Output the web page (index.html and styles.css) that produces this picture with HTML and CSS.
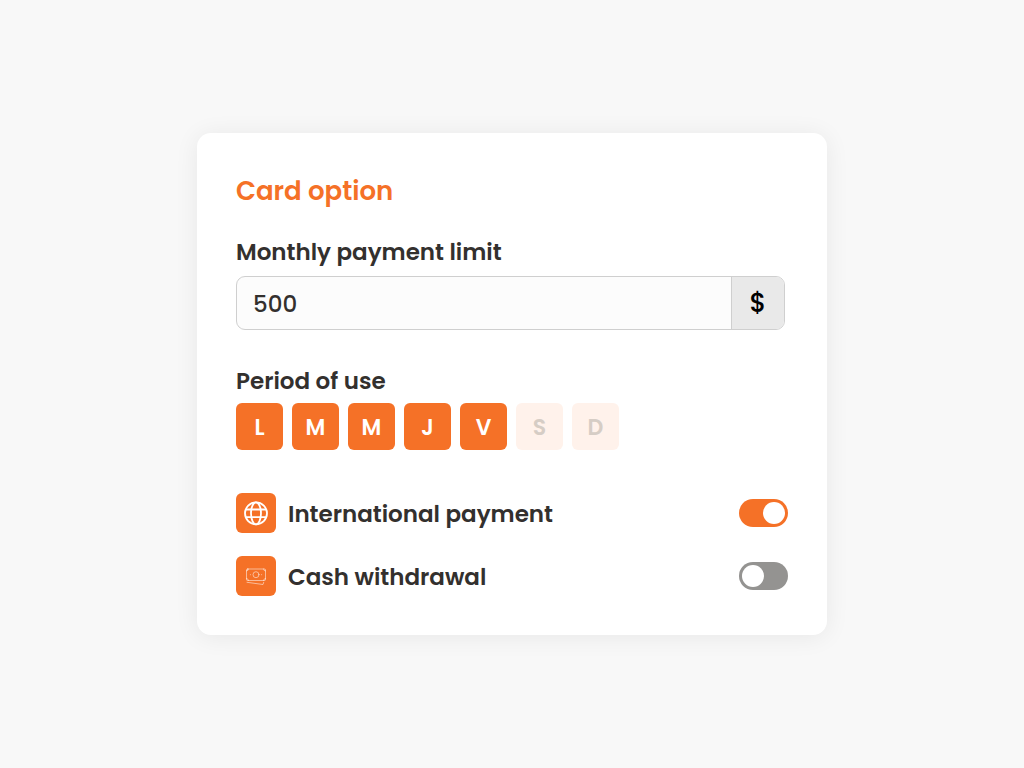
FILE: index.html
```html
<!DOCTYPE html>
<html lang="en">
<head>
<meta charset="utf-8">
<meta name="viewport" content="width=device-width, initial-scale=1">
<title>Card option</title>
<link rel="stylesheet" href="styles.css">
</head>
<body>
<main class="page">
  <form class="card">
    <h1 class="card-title">Card option</h1>

    <div class="limit">
      <label class="label" for="limit">Monthly payment limit</label>
      <div class="field">
        <input class="field-input" id="limit" type="text" inputmode="numeric" value="500">
        <span class="field-unit">$</span>
      </div>
    </div>

    <fieldset class="period">
      <legend class="label">Period of use</legend>
      <div class="days">
        <button class="day day-on" type="button" aria-pressed="true">L</button>
        <button class="day day-on" type="button" aria-pressed="true">M</button>
        <button class="day day-on" type="button" aria-pressed="true">M</button>
        <button class="day day-on" type="button" aria-pressed="true">J</button>
        <button class="day day-on" type="button" aria-pressed="true">V</button>
        <button class="day" type="button" aria-pressed="false">S</button>
        <button class="day" type="button" aria-pressed="false">D</button>
      </div>
    </fieldset>

    <div class="options">
      <div class="option">
        <svg class="icon" viewBox="0 0 40 40" fill="none" stroke="#fff" stroke-width="1.8" aria-hidden="true">
          <circle cx="20" cy="20.3" r="11"/>
          <ellipse cx="20" cy="20.3" rx="5" ry="11"/>
          <path d="M9.700 16.500h20.600M9.700 24.200h20.600"/>
        </svg>
        <label class="option-label" for="international">International payment</label>
        <input class="switch" id="international" type="checkbox" role="switch" checked>
      </div>
      <div class="option">
        <svg class="icon" viewBox="0 0 40 40" fill="none" stroke="#fff" stroke-opacity=".65" stroke-width=".8" stroke-linecap="round" stroke-linejoin="round" aria-hidden="true">
          <rect x="10.500" y="13" width="19" height="11.500" rx="1"/>
          <circle cx="20" cy="18.700" r="3"/>
          <path d="M10.500 15q2 0 2-2M27.500 13q0 2 2 2M10.500 22.500q2 0 2 2M27.500 24.500q0-2 2-2M14.300 18.700h.2M25.500 18.700h.2M11 26.300l16 2.200.7-2.200"/>
        </svg>
        <label class="option-label" for="cash">Cash withdrawal</label>
        <input class="switch" id="cash" type="checkbox" role="switch">
      </div>
    </div>
  </form>
</main>
</body>
</html>
```
FILE: styles.css
```css
* {
  box-sizing: border-box;
}

body {
  margin: 0;
  background: #f8f8f8;
  color: #33302e;
  font-family: Poppins, Inter, sans-serif;
  font-size: 23px;
  font-weight: 600;
}

.page {
  display: flex;
  align-items: center;
  justify-content: center;
  min-height: 100vh;
  padding: 24px;
}

.card {
  width: 100%;
  max-width: 630px;
  padding: 40px 39px 39px;
  border-radius: 14px;
  background: #fff;
  box-shadow: 0 2px 24px rgba(0, 0, 0, .07);
}

.card-title {
  margin: 0 0 26px;
  color: #f57127;
  font-size: 26px;
  font-weight: 600;
  line-height: 36px;
}

.label {
  display: block;
  padding: 0;
  line-height: 34px;
}

.limit {
  margin-right: 3px;
}

.field {
  display: flex;
  height: 54px;
  margin-top: 7px;
  overflow: hidden;
  border: 1px solid #cfcfcf;
  border-radius: 9px;
  background: #fcfcfc;
}

.field-input {
  flex: 1;
  min-width: 0;
  padding: 2px 16px 0;
  border: 0;
  background: none;
  color: inherit;
  font: inherit;
  font-weight: 500;
}

.field-unit {
  display: flex;
  align-items: center;
  justify-content: center;
  width: 53px;
  border-left: 1px solid #cfcfcf;
  background: #e9e9e9;
  color: #000;
  font-size: 26px;
  font-weight: 500;
}

.period {
  min-width: 0;
  margin: 34px 0 43px;
  padding: 0;
  border: 0;
}

.days {
  display: flex;
  flex-wrap: wrap;
  gap: 9px;
  margin-top: 5px;
}

.day {
  width: 47px;
  height: 47px;
  padding: 2px 0 0;
  border: 0;
  border-radius: 6px;
  background: #fff2eb;
  color: #d6cdc5;
  font: inherit;
  font-size: 22px;
}

.day-on {
  background: #f57127;
  color: #fff;
}

.options {
  display: grid;
  gap: 23px;
}

.option {
  display: flex;
  align-items: center;
  gap: 12px;
}

.icon {
  flex: none;
  width: 40px;
  height: 40px;
  border-radius: 6px;
  background: #f57127;
}

.option-label {
  flex: 1;
  padding-top: 2px;
  line-height: 32px;
}

.switch {
  display: flex;
  flex: none;
  align-items: center;
  width: 49px;
  height: 28px;
  margin: 0;
  padding: 0 3px;
  appearance: none;
  border-radius: 14px;
  background: #949391;
}

.switch::before {
  width: 22px;
  height: 22px;
  border-radius: 50%;
  background: #fff;
  content: "";
}

.switch:checked {
  justify-content: flex-end;
  background: #f57127;
}
```
